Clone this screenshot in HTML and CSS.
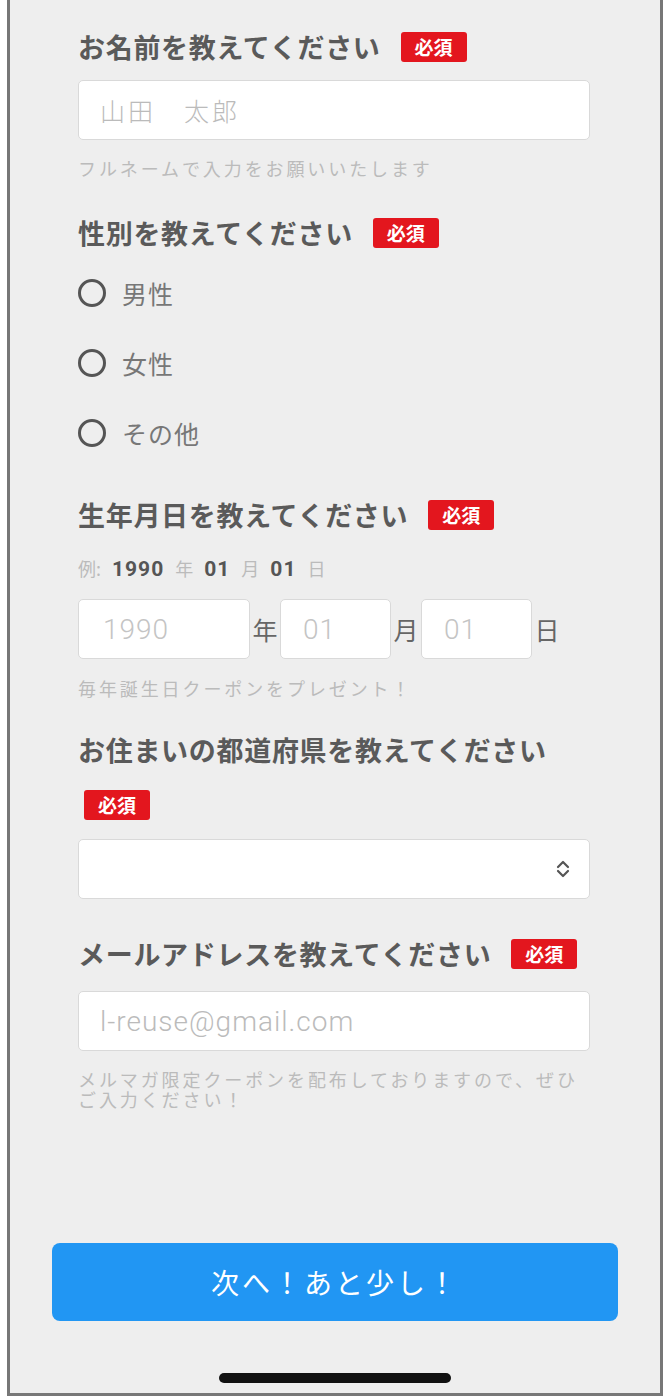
FILE: index.html
```html
<!DOCTYPE html>
<html lang="ja">
<head>
<meta charset="utf-8">
<title>フォーム</title>
<link rel="stylesheet" href="styles.css">
</head>
<body>
<div class="frame">
  <div class="form">
    <div class="title"><span>お名前を教えてください</span><span class="badge">必須</span></div>
    <input class="input mt-13 ph-jp" type="text" placeholder="山田　太郎">
    <p class="help mt-18">フルネームで入力をお願いいたします</p>

    <div class="title mt-35"><span>性別を教えてください</span><span class="badge">必須</span></div>
    <div class="radios">
      <label class="radio"><span class="circle"></span><span>男性</span></label>
      <label class="radio"><span class="circle"></span><span>女性</span></label>
      <label class="radio"><span class="circle"></span><span>その他</span></label>
    </div>

    <div class="title mt-27"><span>生年月日を教えてください</span><span class="badge">必須</span></div>
    <p class="example"><span class="ex-muted">例:</span><b>1990</b><span class="ex-muted">年</span><b>01</b><span class="ex-muted">月</span><b>01</b><span class="ex-muted">日</span></p>
    <div class="date-row">
      <input class="input date-year" type="text" placeholder="1990">
      <span class="unit">年</span>
      <input class="input date-small" type="text" placeholder="01">
      <span class="unit">月</span>
      <input class="input date-small" type="text" placeholder="01">
      <span class="unit">日</span>
    </div>
    <p class="help mt-19">毎年誕生日クーポンをプレゼント！</p>

    <div class="title mt-32"><span>お住まいの都道府県を教えてください</span><span class="badge">必須</span></div>
    <div class="select">
      <svg class="chev" width="16" height="22" viewBox="0 0 16 22"><path d="M3 9 L8 4 L13 9 M3 13 L8 18 L13 13" fill="none" stroke="#555" stroke-width="2.2" stroke-linecap="round" stroke-linejoin="round"/></svg>
    </div>

    <div class="title mt-35"><span>メールアドレスを教えてください</span><span class="badge">必須</span></div>
    <input class="input mt-17 ph-latin" type="text" placeholder="l-reuse@gmail.com">
    <p class="help mt-18">メルマガ限定クーポンを配布しておりますので、ぜひご入力ください！</p>
  </div>
  <button class="next" type="button">次へ！あと少し！</button>
  <div class="home"></div>
</div>
</body>
</html>
```
FILE: styles.css
```css
* { box-sizing: border-box; }
body {
  margin: 0;
  background: #ffffff;
  font-family: "Noto Sans CJK JP", "Noto Sans", sans-serif;
}
.frame {
  margin-left: 7px;
  width: 656px;
  border: 3px solid #777777;
  border-top: none;
  background: #eeeeee;
  padding-top: 27px;
  padding-bottom: 10px;
}
.form {
  padding: 0 70px 0 68px;
}
.title {
  display: flex;
  flex-wrap: wrap;
  align-items: center;
  column-gap: 14px;
  row-gap: 20px;
  font-size: 27px;
  font-weight: 700;
  letter-spacing: 0.7px;
  line-height: 40px;
  color: #5a5a5a;
}
.badge {
  margin-left: 6px;
  width: 66px;
  height: 30px;
  background: #e3161e;
  border-radius: 3px;
  color: #ffffff;
  font-size: 19px;
  letter-spacing: 0;
  line-height: 30px;
  text-align: center;
  font-weight: 700;
}
.mt-13 { margin-top: 13px; }
.mt-17 { margin-top: 17px; }
.mt-18 { margin-top: 18px; }
.mt-19 { margin-top: 19px; }
.mt-27 { margin-top: 27px; }
.mt-32 { margin-top: 32px; }
.mt-35 { margin-top: 35px; }

.input {
  display: block;
  width: 512px;
  height: 60px;
  background: #ffffff;
  border: 1px solid #d9d9d9;
  border-radius: 5px;
  padding: 0 0 0 21px;
  font-size: 25px;
  color: #555555;
  outline: none;
}
.ph-jp { font-family: "Noto Sans CJK JP", sans-serif; font-weight: 300; letter-spacing: 3px; }
.ph-jp::placeholder { color: #bbbbbb; }
.ph-latin { font-family: Roboto, "Noto Sans", sans-serif; font-weight: 300; font-size: 28px; letter-spacing: 1px; }
.ph-latin::placeholder { color: #bbbbbb; }

.help {
  margin-bottom: 0;
  font-size: 18px;
  letter-spacing: 2.9px;
  line-height: 20px;
  color: #bbbbbb;
}

.radios {
  margin-top: 5px;
  display: flex;
  flex-direction: column;
}
.radio {
  display: flex;
  align-items: center;
  gap: 16px;
  height: 70px;
  font-size: 25px;
  letter-spacing: 1px;
  color: #777777;
}
.circle {
  width: 28px;
  height: 28px;
  border: 3px solid #555555;
  border-radius: 50%;
}

.example {
  margin: 21px 0 0;
  display: flex;
  align-items: baseline;
  gap: 11px;
  font-size: 18px;
  line-height: 24px;
  color: #555555;
}
.example b {
  font-family: Roboto, sans-serif;
  font-weight: 700;
  font-size: 21px;
  letter-spacing: 1px;
}
.ex-muted { color: #bbbbbb; }

.date-row {
  margin-top: 18px;
  display: flex;
  align-items: center;
}
.date-row .input {
  font-family: Roboto, sans-serif;
  font-weight: 300;
  font-size: 28px;
  letter-spacing: 1px;
  padding-left: 24px;
}
.date-row .input::placeholder { color: #c4c4c4; }
.date-year { width: 172px; }
.date-row .date-small { width: 111px; padding-left: 22px; }
.unit {
  width: 30px;
  text-align: center;
  font-size: 25px;
  color: #666666;
}

.select {
  margin-top: 19px;
  width: 512px;
  height: 60px;
  background: #ffffff;
  border: 1px solid #d9d9d9;
  border-radius: 5px;
  display: flex;
  align-items: center;
  justify-content: flex-end;
  padding-right: 18px;
}

.next {
  display: block;
  margin: 134px auto 0;
  width: 566px;
  height: 78px;
  border: none;
  border-radius: 8px;
  background: #2196f3;
  color: #ffffff;
  font-family: "Noto Sans CJK JP", sans-serif;
  font-size: 28px;
  letter-spacing: 3px;
  font-weight: 400;
}
.home {
  margin: 52px auto 0;
  width: 232px;
  height: 10px;
  border-radius: 5px;
  background: #111111;
}
```
